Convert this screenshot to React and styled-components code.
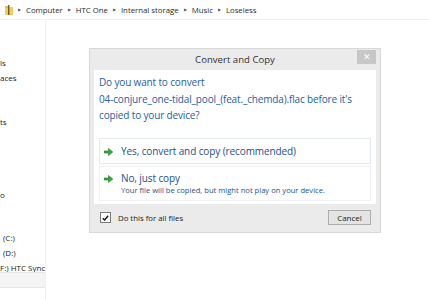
import React from 'react'
import styled, { createGlobalStyle } from 'styled-components'

const GlobalStyle = createGlobalStyle`
  html, body {
    margin: 0;
    padding: 0;
    background: #fff;
  }
  body {
    font-family: 'Open Sans', 'Noto Sans', sans-serif;
    color: #222;
  }
`

const Screen = styled.div`
  position: relative;
  width: 429px;
  height: 300px;
  overflow: hidden;
  background: #fff;
`

const AddressBar = styled.div`
  display: flex;
  align-items: center;
  height: 19px;
  padding-left: 5px;
  border-bottom: 1px solid #f1f1f1;
  font-size: 7.8px;
  color: #2a2a2a;
`

const Crumb = styled.span`
  white-space: nowrap;
`

const Sep = styled.span`
  font-size: 4px;
  color: #555;
  margin: 0 5px 0 5px;
`

const Body = styled.div`
  display: flex;
  height: 280px;
`

const NavPane = styled.div`
  width: 45px;
  border-right: 1px solid #f0f0f0;
  display: flex;
  flex-direction: column;
  overflow: hidden;
`

const NavList = styled.ul`
  list-style: none;
  margin: 0;
  padding: 7px 0 0;
  flex: 1;
  min-height: 0;
  overflow: hidden;
`

const NavItem = styled.li`
  height: 14.6px;
  line-height: 14.6px;
  font-size: 8px;
  white-space: nowrap;
  padding-left: ${p => p.$indent || 0}px;
  color: #222;
`

const HScroll = styled.div`
  flex: none;
  height: 14px;
  margin-bottom: 12px;
  background: #f4f4f4;
  border-top: 1px solid #e6e6e6;
  border-bottom: 1px solid #e6e6e6;
`

const Main = styled.div`
  flex: 1;
`

const Dialog = styled.div`
  position: absolute;
  left: 89px;
  top: 48px;
  width: 292px;
  background: #ebebeb;
  border: 1px solid #d8d8d8;
  box-sizing: border-box;
  display: flex;
  flex-direction: column;
`

const TitleBar = styled.div`
  position: relative;
  height: 21px;
  display: flex;
  align-items: center;
  justify-content: center;
  font-size: 9.6px;
  color: #333;
`

const CloseButton = styled.div`
  position: absolute;
  right: 4px;
  top: 1px;
  width: 19px;
  height: 14px;
  background: #c7c7c7;
  color: #fff;
  font-size: 9px;
  line-height: 14px;
  text-align: center;
`

const Content = styled.div`
  margin: 0 4px;
  background: #fff;
  padding: 4px 5px 3px 5px;
  display: flex;
  flex-direction: column;
`

const Question = styled.p`
  margin: 0 0 14px;
  font-size: 10px;
  letter-spacing: -0.15px;
  line-height: 16.5px;
  color: #2460a8;
`

const CommandLink = styled.div`
  display: flex;
  align-items: flex-start;
  gap: 8px;
  padding: ${p => (p.$sub ? '5px 4px 4px 4px' : '6px 4px 5px 4px')};
  border: 1px solid ${p => (p.$sub ? '#eef2f7' : '#e2e9f1')};
  margin-bottom: ${p => (p.$sub ? 0 : 2)}px;
`

const Arrow = styled.svg`
  flex: none;
  margin-top: 3px;
`

const LinkText = styled.div`
  display: flex;
  flex-direction: column;
`

const LinkTitle = styled.span`
  font-size: 10px;
  letter-spacing: -0.1px;
  line-height: 13px;
  color: #1e4e8f;
`

const LinkNote = styled.span`
  font-size: 7.6px;
  line-height: 11px;
  color: #24528f;
`

const Footer = styled.div`
  display: flex;
  align-items: center;
  justify-content: space-between;
  height: 28px;
  padding: 0 9px 0 10px;
`

const CheckRow = styled.label`
  display: flex;
  align-items: center;
  gap: 7px;
  font-size: 7.8px;
  color: #222;
`

const CheckBox = styled.span`
  width: 9px;
  height: 9px;
  border: 1px solid #7a7a7a;
  background: #fff;
  display: flex;
  align-items: center;
  justify-content: center;
`

const Button = styled.button`
  width: 43px;
  height: 15px;
  padding: 0;
  background: #e4e4e4;
  border: 1px solid #adadad;
  font-family: inherit;
  font-size: 8px;
  color: #222;
`

const FolderIcon = () => (
  <svg width="8" height="10" viewBox="0 0 8 10">
    <rect x="0" y="2" width="8" height="8" fill="#f2cd5c" />
    <rect x="0" y="1" width="3" height="2" fill="#e8b93b" />
    <rect x="3" y="0" width="1.4" height="10" fill="#6b5a2e" />
  </svg>
)

const GreenArrow = () => (
  <Arrow width="9" height="8" viewBox="0 0 9 8">
    <path d="M0 3h4.5V0.5L8.8 4 4.5 7.5V5H0z" fill="#38a838" stroke="#1f7a25" strokeWidth="0.6" />
  </Arrow>
)

const crumbs = ['Computer', 'HTC One', 'Internal storage', 'Music', 'Loseless']

const navItems = [
  { text: '' },
  { text: '' },
  { text: 'ls' },
  { text: 'aces' },
  { text: '' },
  { text: '' },
  { text: 'ts' },
  { text: '' },
  { text: '' },
  { text: '' },
  { text: '' },
  { text: 'o' },
  { text: '' },
  { text: '' },
  { text: '(C:)', indent: 3 },
  { text: '(D:)', indent: 3 },
  { text: 'F:) HTC Sync' },
]

const App = () => (
  <>
    <GlobalStyle />
    <Screen>
      <AddressBar>
        <FolderIcon />
        {crumbs.map(c => (
          <React.Fragment key={c}>
            <Sep>▶</Sep>
            <Crumb>{c}</Crumb>
          </React.Fragment>
        ))}
      </AddressBar>
      <Body>
        <NavPane>
          <NavList>
            {navItems.map((item, i) => (
              <NavItem key={i} $indent={item.indent}>
                {item.text}
              </NavItem>
            ))}
          </NavList>
          <HScroll />
        </NavPane>
        <Main />
      </Body>

      <Dialog>
        <TitleBar>
          Convert and Copy
          <CloseButton>✕</CloseButton>
        </TitleBar>
        <Content>
          <Question>
            Do you want to convert
            <br />
            04-conjure_one-tidal_pool_(feat._chemda).flac before it's copied to your device?
          </Question>
          <CommandLink>
            <GreenArrow />
            <LinkText>
              <LinkTitle>Yes, convert and copy (recommended)</LinkTitle>
            </LinkText>
          </CommandLink>
          <CommandLink $sub>
            <GreenArrow />
            <LinkText>
              <LinkTitle>No, just copy</LinkTitle>
              <LinkNote>Your file will be copied, but might not play on your device.</LinkNote>
            </LinkText>
          </CommandLink>
        </Content>
        <Footer>
          <CheckRow>
            <CheckBox>
              <svg width="7" height="6" viewBox="0 0 7 6">
                <path d="M0.8 3.2 2.6 5 6.2 0.8" fill="none" stroke="#111" strokeWidth="1.4" />
              </svg>
            </CheckBox>
            Do this for all files
          </CheckRow>
          <Button>Cancel</Button>
        </Footer>
      </Dialog>
    </Screen>
  </>
)

export default App
